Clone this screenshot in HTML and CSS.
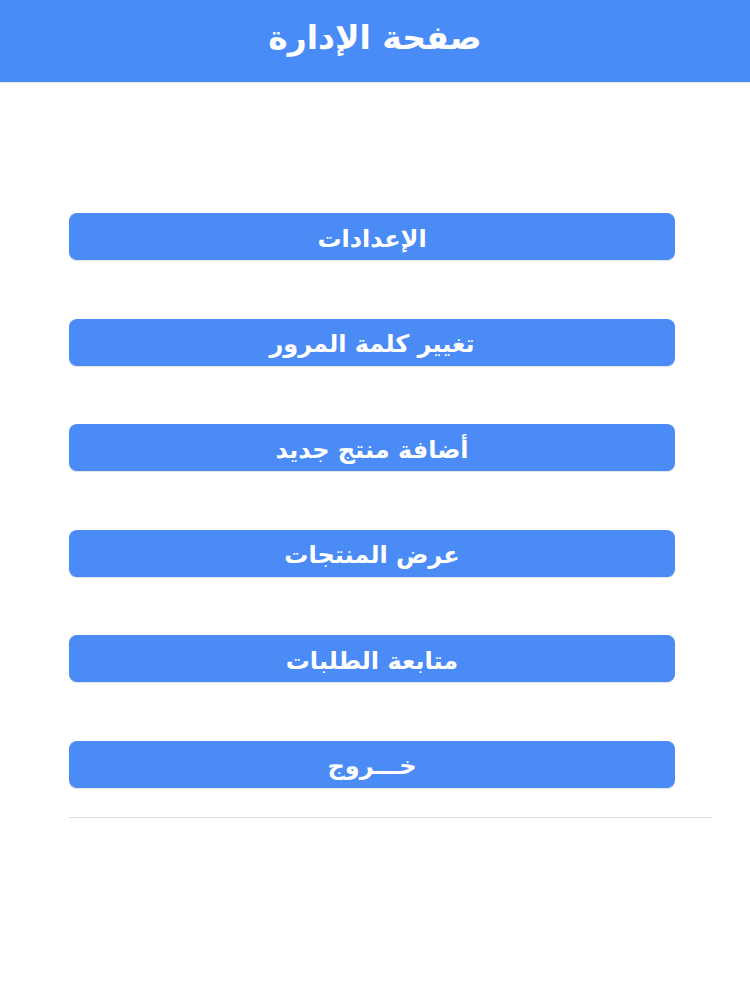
FILE: index.html
```html
<!DOCTYPE html>
<html lang="ar">
<head>
<meta charset="utf-8">
<title>صفحة الإدارة</title>
<link rel="stylesheet" href="styles.css">
</head>
<body>
<header class="topbar"><h1 class="title">صفحة الإدارة</h1></header>
<main class="menu">
  <div class="buttons">
    <button class="btn">الإعدادات</button>
    <button class="btn">تغيير كلمة المرور</button>
    <button class="btn">أضافة منتج جديد</button>
    <button class="btn">عرض المنتجات</button>
    <button class="btn">متابعة الطلبات</button>
    <button class="btn">خـــروج</button>
  </div>
  <hr class="divider">
</main>
</body>
</html>
```
FILE: styles.css
```css
html, body {
  margin: 0;
  padding: 0;
  background: #ffffff;
  font-family: "DejaVu Sans", sans-serif;
}
.topbar {
  height: 82px;
  background: #4a8cf7;
  display: flex;
  align-items: center;
  justify-content: center;
  box-shadow: 0 1px 1px rgba(0,0,0,0.08);
}
.title {
  margin: 0 0 8px 0;
  color: #ffffff;
  font-size: 33px;
  font-weight: bold;
  direction: rtl;
}
.menu {
  padding: 131px 0 0 69px;
}
.buttons {
  display: flex;
  flex-direction: column;
  gap: 58.5px;
  width: 606px;
}
.btn {
  height: 47px;
  border: none;
  border-radius: 8px;
  background: #4a8bf5;
  color: #ffffff;
  font-family: "DejaVu Sans", sans-serif;
  font-size: 24px;
  font-weight: bold;
  direction: rtl;
  padding: 4px 0 0 0;
  box-shadow: 0 1px 1px rgba(0,0,0,0.12);
}
.divider {
  width: 643px;
  margin: 29px 0 0 0;
  border: none;
  border-top: 1.5px solid #dcdcdc;
}
```
